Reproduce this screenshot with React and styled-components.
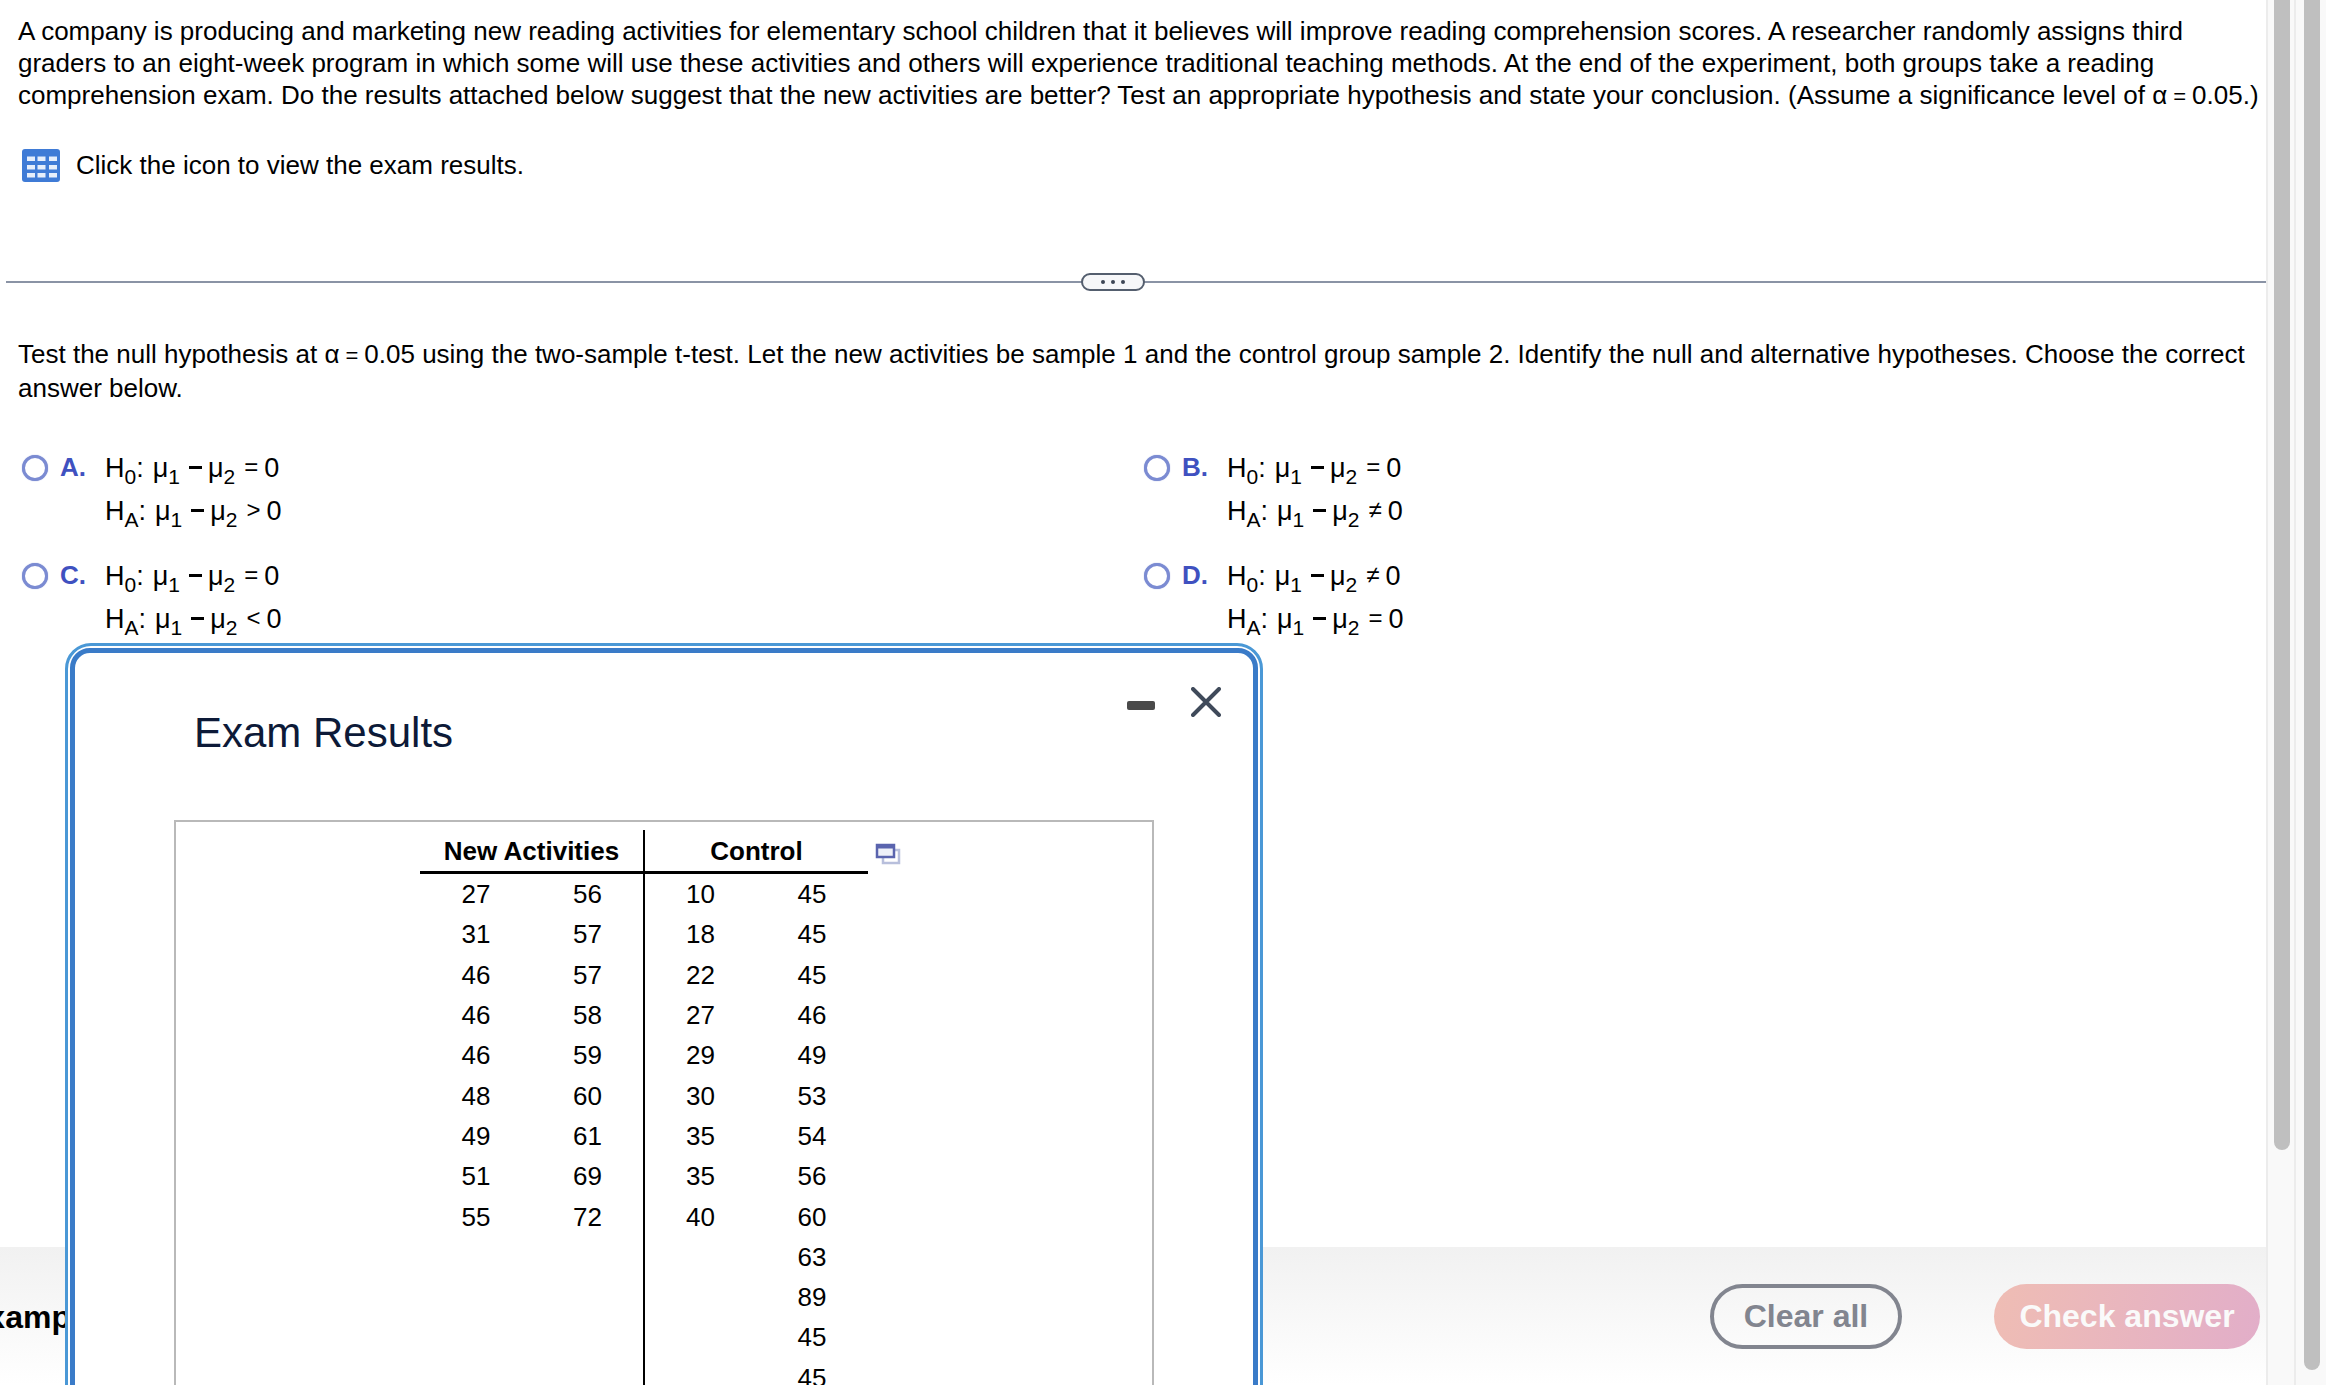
import React from 'react';
import styled, { createGlobalStyle } from 'styled-components';

const Global = createGlobalStyle`
	html, body {
		margin: 0;
		height: 100%;
		overflow: hidden;
		background: #fff;
	}
	body {
		font-family: "Liberation Sans", Arial, sans-serif;
		font-size: 26px;
		color: #000;
	}
`;

const Page = styled.div`
	position: relative;
	display: flex;
	width: 2326px;
	height: 1385px;
	overflow: hidden;
`;

const Main = styled.div`
	flex: 1;
	display: flex;
	flex-direction: column;
	min-width: 0;
`;

const Content = styled.div`
	flex: 1;
	min-height: 0;
	padding: 15px 0 0 18px;
`;

const Question = styled.p`
	margin: 0 -6px 0 0;
	line-height: 32px;
`;

const Eq = styled.span`
	white-space: nowrap;
`;

const EqSign = styled.span`
	display: inline-block;
	margin: 0 6px;
	font-size: 22px;
`;

const Prompt = styled.div`
	display: flex;
	align-items: center;
	gap: 16px;
	margin: 34px 0 0 4px;
	height: 36px;
`;

const Divider = styled.div`
	position: relative;
	display: flex;
	justify-content: center;
	align-items: center;
	height: 18px;
	margin: 90px 0 0 -12px;
	padding: 0 48px 0 2px;

	&::before {
		content: '';
		position: absolute;
		left: 0;
		right: 0;
		top: 8px;
		height: 2px;
		background: #8a93a5;
	}
`;

const Pill = styled.div`
	position: relative;
	display: flex;
	justify-content: center;
	align-items: center;
	gap: 6px;
	box-sizing: border-box;
	width: 64px;
	height: 18px;
	border: 2px solid #545e6e;
	border-radius: 9px;
	background: #f6f7f9;
	span {
		width: 4px;
		height: 4px;
		border-radius: 50%;
		background: #3d4656;
	}
`;

const Instruction = styled.p`
	margin: 47px 0 0;
	line-height: 33px;
`;

const Options = styled.div`
	display: grid;
	grid-template-columns: 1122px 1fr;
	grid-auto-rows: 108px;
	margin: 48px 0 0 4px;
`;

const Option = styled.div`
	display: flex;
	align-items: flex-start;
`;

const Radio = styled.span`
	box-sizing: border-box;
	flex: none;
	width: 26px;
	height: 26px;
	margin-top: 2px;
	border: 3px solid #7b8bd2;
	border-radius: 50%;
	background: #fff;
	box-shadow: 0 0 1px #7b8bd2;
`;

const Letter = styled.span`
	flex: none;
	width: 45px;
	margin-left: 12px;
	font-weight: bold;
	font-size: 26px;
	line-height: 28px;
	color: #3f51c0;
`;

const Lines = styled.div`
	display: flex;
	flex-direction: column;
	gap: 15px;
`;

const Line = styled.div`
	height: 28px;
	font-size: 27px;
	line-height: 28px;
	white-space: nowrap;
`;

const Sub = styled.span`
	display: inline-block;
	font-size: 21px;
	line-height: 1;
	transform: translateY(7px);
`;

const Mu = styled.span`
	margin-left: 9px;
`;

const Minus = styled.span`
	display: inline-block;
	width: 13px;
	height: 3px;
	margin: 0 6px 5px 9px;
	background: #000;
	vertical-align: middle;
`;

const Rel = styled.span`
	display: inline-block;
	margin: 0 6px 0 9px;
	font-size: 24px;
	vertical-align: 2px;
`;

const BottomBar = styled.div`
	display: flex;
	align-items: center;
	height: 138px;
	background: linear-gradient(#f1f1f1, #fff);
`;

const Example = styled.span`
	margin: 2px auto 0 -34px;
	font-size: 32px;
	font-weight: bold;
`;

const PillButton = styled.button`
	box-sizing: border-box;
	height: 65px;
	border-radius: 33px;
	font: bold 32px "Liberation Sans", Arial, sans-serif;
`;

const ClearButton = styled(PillButton)`
	width: 192px;
	border: 4px solid #82858f;
	background: transparent;
	color: #82858f;
`;

const CheckButton = styled(PillButton)`
	width: 266px;
	margin: 0 6px 0 92px;
	border: 0;
	background: linear-gradient(100deg, #efbdb4, #e2aec9);
	color: #fafafa;
`;

const ScrollTrack = styled.div`
	box-sizing: border-box;
	flex: none;
	width: ${(p) => p.$width}px;
	height: 100%;
	padding-left: ${(p) => p.$pad}px;
	background: #f9f9f9;
	border-left: 2px solid #ececec;
`;

const ScrollThumb = styled.div`
	width: 16px;
	height: ${(p) => p.$height}px;
	border-radius: 0 0 8px 8px;
	background: #bfbfbf;
`;

const Modal = styled.div`
	position: absolute;
	left: 65px;
	top: 643px;
	box-sizing: border-box;
	width: 1198px;
	height: 900px;
	border: 3px solid #4a98d6;
	border-radius: 26px;
	padding: 2px;
	background: #fff;
`;

const ModalInner = styled.div`
	position: relative;
	box-sizing: border-box;
	height: 100%;
	border: 5px solid #3a7bc8;
	border-radius: 20px;
	background: #fff;
	padding: 55px 0 0 119px;
`;

const ModalTitle = styled.h2`
	margin: 0;
	font-size: 42px;
	font-weight: normal;
	line-height: 50px;
	color: #0d1a38;
`;

const WindowControls = styled.div`
	position: absolute;
	top: 34px;
	right: 32px;
	display: flex;
	align-items: center;
	gap: 36px;
`;

const Minimize = styled.span`
	width: 28px;
	height: 9px;
	margin-top: 6px;
	border-radius: 2px;
	background: #4a4a4a;
`;

const ResultsPanel = styled.div`
	box-sizing: border-box;
	width: 980px;
	height: 720px;
	margin: 62px 0 0 -20px;
	padding: 8px 0 0 244px;
	border: 2px solid #b9b9b9;
`;

const TableWrap = styled.div`
	position: relative;
	width: 448px;
`;

const Table = styled.table`
	border-collapse: collapse;
	table-layout: fixed;
	width: 448px;

	th, td {
		padding: 0;
		text-align: center;
		height: 40.3px;
		line-height: 30px;
	}
	th {
		height: 41px;
		font-weight: bold;
		border-bottom: 3px solid #000;
	}
	td:nth-child(2), th:nth-child(1) {
		border-right: 2px solid #000;
	}
`;

const Expand = styled.svg`
	position: absolute;
	left: 454px;
	top: 12px;
`;

const rows = [
	[27, 56, 10, 45],
	[31, 57, 18, 45],
	[46, 57, 22, 45],
	[46, 58, 27, 46],
	[46, 59, 29, 49],
	[48, 60, 30, 53],
	[49, 61, 35, 54],
	[51, 69, 35, 56],
	[55, 72, 40, 60],
	['', '', '', 63],
	['', '', '', 89],
	['', '', '', 45],
	['', '', '', 45],
];

const options = [
	{ letter: 'A', h0: '=', ha: '>' },
	{ letter: 'B', h0: '=', ha: '≠' },
	{ letter: 'C', h0: '=', ha: '<' },
	{ letter: 'D', h0: '≠', ha: '=' },
];

const Hypothesis = ({ name, rel }) => (
	<Line>
		H<Sub>{name}</Sub>:<Mu>μ</Mu><Sub>1</Sub><Minus />μ<Sub>2</Sub><Rel>{rel}</Rel>0
	</Line>
);

const Alpha = () => (
	<Eq>α<EqSign>=</EqSign>0.05</Eq>
);

const GridIcon = () => (
	<svg width="38" height="33" viewBox="0 0 38 33">
		<rect x="0" y="0" width="38" height="33" rx="3" fill="#3f7bd6" />
		{[7.5, 16, 24].map((y) =>
			[5, 15.5, 27].map((x) => <rect key={x + '-' + y} x={x} y={y} width="8" height="4.5" fill="#e6eefb" />)
		)}
	</svg>
);

const App = () => {
	return (
		<Page>
			<Global />
			<Main>
				<Content>
					<Question>
						A company is producing and marketing new reading activities for elementary school children that it believes will improve reading comprehension scores. A researcher randomly assigns third graders to an eight-week program in which some will use these activities and others will experience traditional teaching methods. At the end of the experiment, both groups take a reading comprehension exam. Do the results attached below suggest that the new activities are better? Test an appropriate hypothesis and state your conclusion. (Assume a significance level of <Alpha />.)
					</Question>
					<Prompt>
						<GridIcon />
						Click the icon to view the exam results.
					</Prompt>
					<Divider>
						<Pill><span /><span /><span /></Pill>
					</Divider>
					<Instruction>
						Test the null hypothesis at <Alpha /> using the two-sample t-test. Let the new activities be sample 1 and the control group sample 2. Identify the null and alternative hypotheses. Choose the correct answer below.
					</Instruction>
					<Options>
						{options.map((o) => (
							<Option key={o.letter}>
								<Radio />
								<Letter>{o.letter}.</Letter>
								<Lines>
									<Hypothesis name="0" rel={o.h0} />
									<Hypothesis name="A" rel={o.ha} />
								</Lines>
							</Option>
						))}
					</Options>
				</Content>
				<BottomBar>
					<Example>Example</Example>
					<ClearButton>Clear all</ClearButton>
					<CheckButton>Check answer</CheckButton>
				</BottomBar>
			</Main>
			<ScrollTrack $width={28} $pad={6}>
				<ScrollThumb $height={1150} />
			</ScrollTrack>
			<ScrollTrack $width={32} $pad={8}>
				<ScrollThumb $height={1370} />
			</ScrollTrack>
			<Modal>
				<ModalInner>
					<ModalTitle>Exam Results</ModalTitle>
					<WindowControls>
						<Minimize />
						<svg width="30" height="30" viewBox="0 0 30 30">
							<path d="M2 2 L28 28 M28 2 L2 28" stroke="#3f4a5a" strokeWidth="4" strokeLinecap="round" fill="none" />
						</svg>
					</WindowControls>
					<ResultsPanel>
						<TableWrap>
							<Table>
								<thead>
									<tr>
										<th colSpan="2">New Activities</th>
										<th colSpan="2">Control</th>
									</tr>
								</thead>
								<tbody>
									{rows.map((r, index) => (
										<tr key={index}>
											{r.map((v, i) => <td key={i}>{v}</td>)}
										</tr>
									))}
								</tbody>
							</Table>
							<Expand width="28" height="24" viewBox="0 0 28 24">
								<rect x="9" y="8" width="16" height="13" fill="#fff" stroke="#b8bfdc" strokeWidth="2.5" />
								<rect x="3" y="3" width="17" height="12" fill="#eef0f8" stroke="#5a64ae" strokeWidth="2.5" />
								<rect x="3" y="3" width="17" height="3.5" fill="#5a64ae" />
							</Expand>
						</TableWrap>
					</ResultsPanel>
				</ModalInner>
			</Modal>
		</Page>
	);
};

export default App;
